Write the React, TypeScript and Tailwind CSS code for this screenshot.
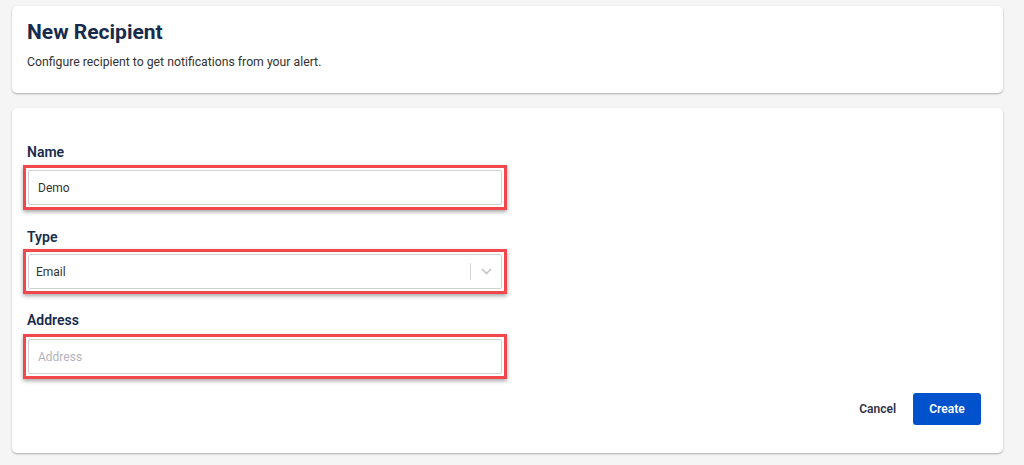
import React from "react";

function RedBox({ children }: { children: React.ReactNode }) {
  return (
    <div className="w-[484px] h-[45px] border-[3px] border-[#f2484d] p-[2px] shadow-[0_2px_4px_rgba(0,0,0,0.35)]">
      {children}
    </div>
  );
}

export default function App() {
  return (
    <div
      className="w-[1024px] h-[465px] bg-[#f5f5f5] px-[12px] pt-[6px] overflow-hidden"
      style={{ fontFamily: "Roboto, 'Noto Sans', sans-serif" }}
    >
      <div className="w-[991px] h-[87px] bg-white rounded-[5px] shadow-[0_1px_2px_rgba(0,0,0,0.3)] px-[15px] pt-[12px]">
        <h1 className="text-[21px] leading-[28px] font-bold text-[#172b4d]">New Recipient</h1>
        <p className="mt-[8px] text-[12.25px] leading-[16px] text-[#333]">
          Configure recipient to get notifications from your alert.
        </p>
      </div>

      <div className="mt-[15px] w-[991px] h-[345px] bg-white rounded-[5px] shadow-[0_1px_2px_rgba(0,0,0,0.3)] pl-[11px] pr-[22px] pt-[34px] flex flex-col">
        <label className="ml-[4px] text-[14px] leading-[20px] font-semibold text-[#172b4d]">Name</label>
        <div className="mt-[3px]">
          <RedBox>
            <div className="h-full border border-[#d0d0d0] rounded-[2px] flex items-center pl-[9px] text-[12px] text-[#333]">
              Demo
            </div>
          </RedBox>
        </div>

        <label className="mt-[17px] ml-[4px] text-[14px] leading-[20px] font-semibold text-[#172b4d]">Type</label>
        <div className="mt-[2px]">
          <RedBox>
            <div className="h-full border border-[#d0d0d0] rounded-[2px] flex items-center pl-[7px] text-[12px] text-[#333]">
              <span className="flex-1">Email</span>
              <span className="w-px h-[17px] bg-[#d4d4d4]"></span>
              <span className="w-[30px] flex justify-center">
                <svg width="11" height="7" viewBox="0 0 11 7" fill="none">
                  <path d="M1 1l4.5 4.5L10 1" stroke="#c4c4c4" strokeWidth="1.6" />
                </svg>
              </span>
            </div>
          </RedBox>
        </div>

        <label className="mt-[16px] ml-[4px] text-[14px] leading-[20px] font-semibold text-[#172b4d]">Address</label>
        <div className="mt-[4px]">
          <RedBox>
            <div className="h-full border border-[#d0d0d0] rounded-[2px] flex items-center pl-[9px] text-[12px] text-[#b3b3bd]">
              Address
            </div>
          </RedBox>
        </div>

        <div className="mt-[14px] flex justify-end items-center gap-[17px]">
          <button className="text-[12px] font-semibold text-[#2f3347]">Cancel</button>
          <button className="w-[68px] h-[32px] rounded-[3px] bg-[#0052cc] text-white text-[12px] font-semibold">
            Create
          </button>
        </div>
      </div>
    </div>
  );
}
